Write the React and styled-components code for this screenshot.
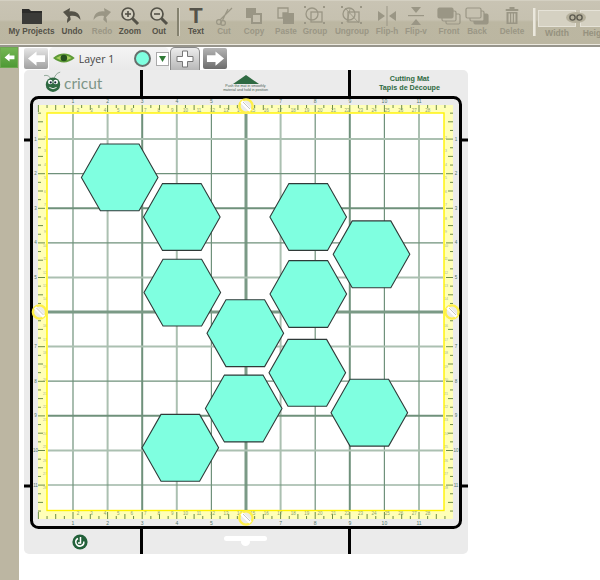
import React from "react";
import styled, { createGlobalStyle } from "styled-components";

const GlobalStyle = createGlobalStyle`
  html, body {
    margin: 0;
    padding: 0;
    background: #fff;
    font-family: "Liberation Sans", Arial, sans-serif;
  }
`;

const Page = styled.div`
  width: 600px;
  height: 580px;
  overflow: hidden;
  display: flex;
  flex-direction: column;
`;

const Toolbar = styled.div`
  height: 44px;
  flex: none;
  display: flex;
  padding-left: 8px;
  overflow: hidden;
  background: linear-gradient(#c9c4b4 0%, #c6c1b0 45%, #bcb7a2 50%, #bbb6a1 100%);
  border-bottom: 1px solid #ece9df;
  box-shadow: inset 0 1px 0 #d4d0c2;
`;

const ToolBottomEdge = styled.div`
  height: 2px;
  flex: none;
  background: #97958c;
`;

const Tool = styled.div`
  width: ${(p) => p.$w}px;
  flex: none;
  display: flex;
  flex-direction: column;
  align-items: center;
  padding-top: 6px;
  color: ${(p) => (p.$off ? "#9a9685" : "#545248")};
`;

const ToolIcon = styled.div`
  height: 20px;
  display: flex;
  align-items: center;
  justify-content: center;
  margin-bottom: 1px;
`;

const ToolLabel = styled.div`
  font-size: 8.2px;
  font-weight: bold;
  line-height: 10px;
  white-space: nowrap;
`;

const ToolSeparator = styled.div`
  width: 2px;
  height: 28px;
  flex: none;
  margin: 8px ${(p) => p.$right}px 0 ${(p) => p.$left}px;
  background: ${(p) => p.$light ? "#ebe8dd" : "#85826f"};
  box-shadow: 1px 0 0 #d8d4c6;
`;

const TextGlyph = styled.div`
  font-family: "Liberation Sans", Arial, sans-serif;
  font-size: 22px;
  font-weight: bold;
  line-height: 20px;
  height: 20px;
  color: #55534a;
`;

const SizeGroup = styled.div`
  flex: none;
  width: 68px;
  display: flex;
  flex-direction: column;
  padding-top: 10px;
`;

const SizeFields = styled.div`
  display: flex;
  gap: 4px;
  position: relative;
`;

const SizeField = styled.div`
  width: 36px;
  height: 15px;
  flex: none;
  background: #d5d1c2;
  border: 1px solid #e6e3d8;
`;

const LinkBadge = styled.svg`
  position: absolute;
  left: 28px;
  top: 2px;
`;

const SizeLabels = styled.div`
  display: flex;
  color: #96927f;
  font-size: 8.6px;
  font-weight: bold;
  line-height: 10px;
  margin-top: 1px;
`;

const SizeLabel = styled.div`
  width: ${(p) => p.$w}px;
  flex: none;
  text-align: center;
  white-space: nowrap;
`;

const Body = styled.div`
  flex: 1;
  display: flex;
  min-height: 0;
`;

const Sidebar = styled.div`
  width: 19px;
  flex: none;
  background: #bcb6a2;
`;

const SideButton = styled.div`
  width: 18px;
  height: 21px;
  display: flex;
  align-items: center;
  justify-content: center;
  background: linear-gradient(#74b553, #4f9a35);
  border: 1px solid #6da84f;
  box-sizing: border-box;
`;

const Workspace = styled.div`
  flex: 1;
  padding-left: 5px;
  display: flex;
  flex-direction: column;
`;

const TabRow = styled.div`
  height: 23px;
  flex: none;
  display: flex;
  align-items: flex-end;
`;

const ArrowButton = styled.div`
  width: 24px;
  height: 21px;
  flex: none;
  margin-bottom: 1px;
  display: flex;
  align-items: center;
  justify-content: center;
  border-radius: 2px;
  background: ${(p) => p.$dark
    ? "linear-gradient(#b4b4b4, #6c6c6c)"
    : "linear-gradient(#e6e6e6, #a0a0a0)"};
`;

const LayerTab = styled.div`
  width: 120px;
  height: 23px;
  flex: none;
  margin-left: 1px;
  display: flex;
  align-items: center;
  padding-left: 4px;
  box-sizing: border-box;
  border-radius: 5px 5px 0 0;
  background: linear-gradient(#f4f4f4, #e9e9e9);
`;

const LayerName = styled.span`
  font-family: "Open Sans", "Liberation Sans", sans-serif;
  font-size: 10.5px;
  color: #444;
  margin-left: 4px;
  width: 56px;
  white-space: nowrap;
`;

const ColorDot = styled.div`
  width: 13px;
  height: 13px;
  flex: none;
  border-radius: 50%;
  background: #7fffe0;
  border: 2px solid #666f6c;
`;

const ColorPicker = styled.div`
  width: 11px;
  height: 12px;
  flex: none;
  margin-left: 5px;
  display: flex;
  align-items: center;
  justify-content: center;
  background: #fff;
  border: 1px solid #aaa;
`;

const AddTab = styled.div`
  width: 30px;
  height: 23px;
  flex: none;
  margin: 0 3px 0 1px;
  display: flex;
  align-items: center;
  justify-content: center;
  box-sizing: border-box;
  border: 1px solid #8a8a8a;
  border-bottom: none;
  border-radius: 5px 5px 0 0;
  background: linear-gradient(#ececec, #b8b8b8);
`;

const Card = styled.div`
  width: 444px;
  height: 484px;
  flex: none;
  display: flex;
  flex-direction: column;
  border-radius: 5px;
  background: #ebebeb;
`;

const CardBand = styled.div`
  height: ${(p) => p.$h}px;
  flex: none;
  display: grid;
  grid-template-columns: 116px 211px 117px;
`;

const BandCell = styled.div`
  display: flex;
  flex-direction: column;
  align-items: center;
  justify-content: center;
  box-sizing: border-box;
  ${(p) => p.$ruled && "border-left: 3px solid #000; border-right: 3px solid #000;"}
`;

const LogoRow = styled.div`
  align-self: flex-start;
  display: flex;
  align-items: center;
  margin: 0 0 3px 20px;
`;

const LogoWord = styled.span`
  font-family: "Lato", "Liberation Sans", sans-serif;
  font-size: 15.5px;
  line-height: 18px;
  color: #7d9587;
  margin: 3px 0 0 2px;
`;

const MicroText = styled.div`
  font-size: 3.6px;
  line-height: 4px;
  color: #47604f;
  white-space: nowrap;
`;

const MatTitle = styled.div`
  font-size: 7.2px;
  font-weight: bold;
  line-height: 9px;
  color: #2f6a42;
  white-space: nowrap;
`;

const MatDrawing = styled.svg`
  display: block;
  flex: none;
`;

const PowerMark = styled.svg`
  margin-right: 4px;
`;

const Pill = styled.div`
  width: 43px;
  height: 5px;
  border-radius: 3px;
  background: #fff;
  position: relative;
  margin-bottom: 7px;

  &::after {
    content: "";
    position: absolute;
    left: 17px;
    top: 2px;
    width: 9px;
    height: 8px;
    border-radius: 50%;
    background: #fff;
  }
`;

const ink = "currentColor";

const Folder = () => (
  <svg width="22" height="18" viewBox="0 0 22 18">
    <path d="M1 2 h7 l2 2 h11 v13 h-20 z" fill="#2c2c2a" />
    <rect x="1" y="6" width="20" height="11" fill="#3b3b38" />
  </svg>
);
const Undo = ({ flip }) => (
  <svg width="20" height="16" viewBox="0 0 20 16" style={flip ? { transform: "scaleX(-1)" } : undefined}>
    <path d="M1 4 L8 0 L7.5 3.5 C13 2.5 18 5 18.5 12 C16 8 12 7 8 8 L8.5 12 Z" fill={ink} />
    <path d="M5 15 C5 10 6 9 8 8 L8.5 12 Z" fill={ink} />
  </svg>
);
const Magnifier = ({ plus }) => (
  <svg width="20" height="20" viewBox="0 0 20 20" fill="none" stroke={ink}>
    <circle cx="8" cy="8" r="6" strokeWidth="1.7" fill="#d2cebf" />
    <path d="M12.5 12.5 L18 18" strokeWidth="3" />
    <path d="M5 8 H11" strokeWidth="1.6" />
    {plus && <path d="M8 5 V11" strokeWidth="1.6" />}
  </svg>
);
const Scissors = () => (
  <svg width="20" height="20" viewBox="0 0 20 20" fill="none" stroke={ink} strokeWidth="1.2">
    <circle cx="5" cy="16" r="2.4" />
    <circle cx="9" cy="17" r="2.4" />
    <path d="M6 14 L18 2 M8.5 14.5 L11 9 L14 3" />
  </svg>
);
const Copy = () => (
  <svg width="18" height="18" viewBox="0 0 18 18">
    <rect x="1" y="1" width="10" height="10" fill={ink} />
    <rect x="6" y="6" width="11" height="11" fill={ink} />
    <rect x="8" y="8" width="7" height="7" fill="#c3bead" />
  </svg>
);
const Paste = () => (
  <svg width="18" height="18" viewBox="0 0 18 18">
    <path d="M1 1 h10 v5 h-5 v5 h-5 z" fill="none" stroke={ink} strokeWidth="1.3" />
    <rect x="6" y="6" width="11" height="11" fill={ink} />
  </svg>
);
const Grouped = ({ scatter }) => (
  <svg width="22" height="20" viewBox="0 0 22 20" fill="none" stroke={ink} strokeWidth="1.3">
    <circle cx="8" cy="8" r="6" />
    <rect x="7" y="6" width="11" height="10" />
    {scatter && <path d="M4 2 L18 17 M9 3 L6 16" strokeWidth="0.9" />}
    <g fill={ink} stroke="none">
      <rect x="0" y="16" width="2" height="2" />
      <rect x="19" y="16" width="2" height="2" />
      <rect x="19" y="0" width="2" height="2" />
      <rect x="0" y="0" width="2" height="2" />
    </g>
  </svg>
);
const FlipH = () => (
  <svg width="20" height="20" viewBox="0 0 20 20" fill={ink}>
    <path d="M1 5 L8 10 L1 15 Z" />
    <path d="M19 5 L12 10 L19 15 Z" />
    <rect x="9.5" y="0" width="1" height="20" />
  </svg>
);
const FlipV = () => (
  <svg width="18" height="20" viewBox="0 0 18 20" fill={ink}>
    <path d="M4 1 H14 L9 7 Z" />
    <path d="M4 19 H14 L9 13 Z" />
    <rect x="1" y="9" width="16" height="1.2" />
  </svg>
);
const Stack = ({ front }) => (
  <svg width="24" height="18" viewBox="0 0 24 18">
    <rect x="9" y="7" width="14" height="10" rx="1.5" fill={front ? "none" : ink} stroke={ink} strokeWidth="1.2" />
    <rect x="5" y="4" width="14" height="10" rx="1.5" fill="#c3bead" stroke={ink} strokeWidth="1.2" />
    <rect x="1" y="1" width="15" height="10" rx="1.5" fill={front ? ink : "#c6c1b0"} stroke={ink} strokeWidth="1.2" />
  </svg>
);
const Trash = () => (
  <svg width="14" height="18" viewBox="0 0 14 18" fill={ink}>
    <rect x="0.5" y="2" width="13" height="2" rx="1" />
    <rect x="4.5" y="0" width="5" height="2" />
    <path d="M1.5 5 H12.5 V17 H1.5 Z M3.5 6.5 V15.5 H5 V6.5 Z M6.2 6.5 V15.5 H7.8 V6.5 Z M9 6.5 V15.5 H10.5 V6.5 Z" fillRule="evenodd" />
  </svg>
);

const tools = [
  { label: "My Projects", w: 47, icon: <Folder /> },
  { label: "Undo", w: 34, icon: <Undo /> },
  { label: "Redo", w: 26, off: true, icon: <Undo flip /> },
  { label: "Zoom", w: 30, icon: <Magnifier plus /> },
  { label: "Out", w: 28, icon: <Magnifier /> },
  { sep: true, left: 4, right: 4 },
  { label: "Text", w: 26, icon: <TextGlyph>T</TextGlyph> },
  { label: "Cut", w: 30, off: true, icon: <Scissors /> },
  { label: "Copy", w: 30, off: true, icon: <Copy /> },
  { label: "Paste", w: 34, off: true, icon: <Paste /> },
  { label: "Group", w: 24, off: true, icon: <Grouped /> },
  { label: "Ungroup", w: 50, off: true, icon: <Grouped scatter /> },
  { label: "Flip-h", w: 20, off: true, icon: <FlipH /> },
  { label: "Flip-v", w: 38, off: true, icon: <FlipV /> },
  { label: "Front", w: 28, off: true, icon: <Stack front /> },
  { label: "Back", w: 28, off: true, icon: <Stack /> },
  { label: "Delete", w: 42, off: true, icon: <Trash /> },
];

const hexes = [
  [119.7, 177.4], [181.8, 217], [182.3, 292.6], [308.2, 217], [371.5, 254.3], [308.3, 294],
  [245.3, 333.2], [307.3, 372.8], [243.7, 408.5], [369.3, 412.7], [180.3, 447.8],
];

const hexPoints = ([x, y]) =>
  [[-38.3, 0], [-19.3, -33.4], [19.3, -33.4], [38.3, 0], [19.3, 33.4], [-19.3, 33.4]]
    .map(([dx, dy]) => `${x + dx},${y + dy}`)
    .join(" ");

// stroke style per grid line, as they alternate on the printed mat
const lineStyles = {
  thin: { stroke: "#6f917b", strokeWidth: 1.2 },
  pale: { stroke: "#abc0b1", strokeWidth: 2 },
  dark: { stroke: "#6f917b", strokeWidth: 2 },
  bold: { stroke: "#7b9a86", strokeWidth: 3 },
};

const STEP = 34.6;
const vertical = ["thin", "pale", "dark", "pale", "thin", "bold", "pale", "thin", "dark", "thin", "pale"];
const horizontal = ["pale", "thin", "dark", "thin", "pale", "bold", "pale", "thin", "dark", "pale", "thin"];
const gridX = (i) => 73 + STEP * i;
const gridY = (i) => 139 + STEP * i;

const Ticks = () => {
  const marks = [];
  for (let i = 0; i < 48; i++) {
    const size = i % 4 === 0 ? 7 : i % 2 === 0 ? 5 : 3;
    const x = 38.4 + (STEP / 4) * i;
    const y = 104.5 + (STEP / 4) * i;
    if (x < 452) {
      marks.push(<line key={`t${i}`} x1={x} x2={x} y1={105} y2={105 + size} />);
      marks.push(<line key={`b${i}`} x1={x} x2={x} y1={519} y2={519 - size} />);
    }
    if (y < 519 && y > 112) {
      marks.push(<line key={`l${i}`} x1={38} x2={38 + size} y1={y} y2={y} />);
      marks.push(<line key={`r${i}`} x1={453} x2={453 - size} y1={y} y2={y} />);
    }
  }
  return <g stroke="#6d8c48" strokeWidth="1">{marks}</g>;
};

const Scale = () => {
  const labels = [];
  for (let n = 1; n <= 11; n++) {
    labels.push(<text key={`it${n}`} x={gridX(n - 1)} y={102.5} fontSize="5" textAnchor="middle" fill="#51766a">{n}</text>);
    labels.push(<text key={`ib${n}`} x={gridX(n - 1)} y={525} fontSize="5" textAnchor="middle" fill="#51766a">{n}</text>);
    labels.push(<text key={`il${n}`} x={35.5} y={gridY(n - 1) + 1.5} fontSize="4.5" textAnchor="middle" fill="#51766a">{n}</text>);
    labels.push(<text key={`ir${n}`} x={456} y={gridY(n - 1) + 1.5} fontSize="4.5" textAnchor="middle" fill="#51766a">{n}</text>);
  }
  for (let n = 2; n <= 28; n++) {
    const x = 78 + (n - 2) * 13.45;
    labels.push(<text key={`ct${n}`} x={x} y={112} fontSize="4.5" textAnchor="middle" fill="#8aa06a">{n}</text>);
    labels.push(<text key={`cb${n}`} x={x} y={515} fontSize="4.5" textAnchor="middle" fill="#8aa06a">{n}</text>);
    const y = 139 + (n - 2) * 13.45;
    if (y < 508) {
      labels.push(<text key={`cl${n}`} x={45} y={y} fontSize="3.6" textAnchor="middle" fill="#a3b285">{n}</text>);
      labels.push(<text key={`cr${n}`} x={446} y={y} fontSize="3.6" textAnchor="middle" fill="#a3b285">{n}</text>);
    }
  }
  return <g fontFamily="Liberation Sans, Arial, sans-serif">{labels}</g>;
};

const Handle = ({ x, y }) => (
  <g transform={`translate(${x} ${y})`}>
    <circle r="6.6" fill="#ecece8" stroke="#fff04a" strokeWidth="2.4" />
    <path d="M-4.5 -4.5 L4.5 4.5" stroke="#fff" strokeWidth="3.4" />
    <path d="M-3 -4 L4 3" stroke="#b5b5ae" strokeWidth="0.8" />
  </g>
);

const Mat = () => (
  <MatDrawing width="444" height="433" viewBox="24 96 444 433">
    <rect x="38" y="105" width="415" height="414" fill="#ffffb8" />
    <Ticks />
    <Scale />
    <rect x="47" y="113" width="397" height="397.5" fill="#fff" stroke="#fff200" strokeWidth="1.4" />
    {vertical.map((kind, i) => (
      <line key={i} x1={gridX(i)} x2={gridX(i)} y1={114} y2={510} {...lineStyles[kind]} />
    ))}
    {horizontal.map((kind, i) => (
      <line key={i} y1={gridY(i)} y2={gridY(i)} x1={48} x2={443} {...lineStyles[kind]} />
    ))}
    {hexes.map((hex) => (
      <polygon key={hex.join()} points={hexPoints(hex)} fill="#7fffe0" stroke="#2f3a38" strokeWidth="1.1" />
    ))}
    <rect x="31.5" y="97.5" width="429" height="430" rx="7" fill="none" stroke="#000" strokeWidth="3" />
    <g stroke="#000" strokeWidth="3">
      <line x1="24" x2="31" y1="140" y2="140" />
      <line x1="24" x2="31" y1="486" y2="486" />
      <line x1="460" x2="468" y1="140" y2="140" />
      <line x1="460" x2="468" y1="486" y2="486" />
    </g>
    <Handle x={246} y={106} />
    <Handle x={246} y={518} />
    <Handle x={39.5} y={312} />
    <Handle x={452} y={312} />
  </MatDrawing>
);

const Bug = () => (
  <svg width="18" height="22" viewBox="0 0 20 24">
    <path d="M8 9 C6 5 3 4 0 5 M11 9 C12 5 14 2 18 1" fill="none" stroke="#6f8f7a" strokeWidth="0.8" />
    <circle cx="10" cy="15" r="8" fill="#2f6a42" />
    <circle cx="7" cy="12" r="2.6" fill="#fff" />
    <circle cx="13" cy="12" r="2.6" fill="#fff" />
    <circle cx="7.5" cy="12.5" r="1.2" fill="#123" />
    <circle cx="12.5" cy="12.5" r="1.2" fill="#123" />
    <path d="M6 18 Q10 21 14 18" fill="none" stroke="#fff" strokeWidth="1" />
  </svg>
);

const Eye = () => (
  <svg width="22" height="13" viewBox="0 0 22 13">
    <path d="M0 6 Q11 -3 22 6 Q11 15 0 6 Z" fill="#5d9a36" />
    <path d="M3 6 Q11 1 19 6 Q11 11 3 6 Z" fill="#a9d05f" />
    <circle cx="11" cy="6" r="3.3" fill="#26521f" />
  </svg>
);

const Arrow = ({ left, size = 19 }) => (
  <svg width={size} height={size * 0.8} viewBox="0 0 20 16" style={left ? undefined : { transform: "scaleX(-1)" }}>
    <path d="M1 8 L10 0.5 V4.5 H19 V11.5 H10 V15.5 Z" fill="#fff" />
  </svg>
);

const Plus = () => (
  <svg width="18" height="18" viewBox="0 0 18 18">
    <path d="M6.5 1 H11.5 V6.5 H17 V11.5 H11.5 V17 H6.5 V11.5 H1 V6.5 H6.5 Z" fill="#fff" stroke="#777" strokeWidth="1" />
  </svg>
);

const Power = () => (
  <PowerMark width="16" height="16" viewBox="0 0 16 16">
    <circle cx="8" cy="8" r="7.6" fill="#23613a" />
    <path d="M6 4.5 A4 4 0 1 0 11.8 7.5 M8.5 3 V9 H6" fill="none" stroke="#fff" strokeWidth="1.5" />
  </PowerMark>
);

export default function App() {
  return (
    <Page>
      <GlobalStyle />
      <Toolbar>
        {tools.map((tool, i) =>
          tool.sep ? (
            <ToolSeparator key={i} $left={tool.left} $right={tool.right} />
          ) : (
            <Tool key={tool.label} $w={tool.w} $off={tool.off}>
              <ToolIcon>{tool.icon}</ToolIcon>
              <ToolLabel>{tool.label}</ToolLabel>
            </Tool>
          )
        )}
        <ToolSeparator $left={0} $right={3} $light />
        <SizeGroup>
          <SizeFields>
            <SizeField />
            <SizeField />
            <LinkBadge width="20" height="11" viewBox="0 0 20 11" fill="none">
              <ellipse cx="10" cy="5.5" rx="10" ry="5.5" fill="#b5b09c" />
              <circle cx="6.5" cy="5.5" r="2.6" stroke="#5d5b50" strokeWidth="1.4" />
              <circle cx="13.5" cy="5.5" r="2.6" stroke="#5d5b50" strokeWidth="1.4" />
            </LinkBadge>
          </SizeFields>
          <SizeLabels>
            <SizeLabel $w={38}>Width</SizeLabel>
            <SizeLabel $w={40}>Height</SizeLabel>
          </SizeLabels>
        </SizeGroup>
      </Toolbar>
      <ToolBottomEdge />
      <Body>
        <Sidebar>
          <SideButton>
            <Arrow left size={11} />
          </SideButton>
        </Sidebar>
        <Workspace>
          <TabRow>
            <ArrowButton>
              <Arrow left />
            </ArrowButton>
            <LayerTab>
              <Eye />
              <LayerName>Layer 1</LayerName>
              <ColorDot />
              <ColorPicker>
                <svg width="7" height="6" viewBox="0 0 7 6">
                  <path d="M0 0 H7 L3.5 6 Z" fill="#2f7a35" />
                </svg>
              </ColorPicker>
            </LayerTab>
            <AddTab>
              <Plus />
            </AddTab>
            <ArrowButton $dark>
              <Arrow />
            </ArrowButton>
          </TabRow>
          <Card>
            <CardBand $h={26}>
              <BandCell>
                <LogoRow>
                  <Bug />
                  <LogoWord>cricut</LogoWord>
                </LogoRow>
              </BandCell>
              <BandCell $ruled>
                <svg width="26" height="9" viewBox="0 0 26 9">
                  <path d="M0 9 L13 0 L26 9 Z" fill="#2f6a42" />
                </svg>
                <MicroText>Push the mat in smoothly</MicroText>
                <MicroText>material and hold in position</MicroText>
              </BandCell>
              <BandCell>
                <MatTitle>Cutting Mat</MatTitle>
                <MatTitle>Tapis de Découpe</MatTitle>
              </BandCell>
            </CardBand>
            <Mat />
            <CardBand $h={25}>
              <BandCell>
                <Power />
              </BandCell>
              <BandCell $ruled>
                <Pill />
              </BandCell>
              <BandCell />
            </CardBand>
          </Card>
        </Workspace>
      </Body>
    </Page>
  );
}
